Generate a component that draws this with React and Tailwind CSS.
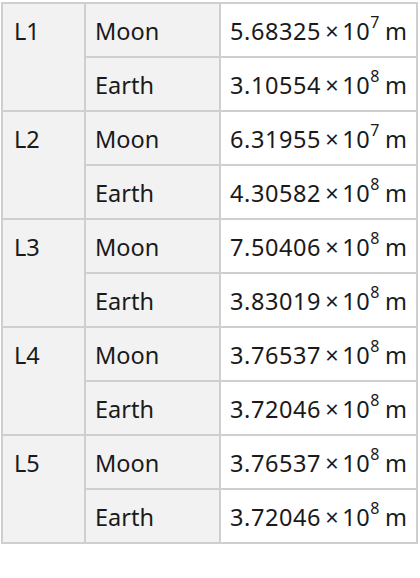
const rows = [
  { point: "L1", moon: ["5.68325", "7"], earth: ["3.10554", "8"] },
  { point: "L2", moon: ["6.31955", "7"], earth: ["4.30582", "8"] },
  { point: "L3", moon: ["7.50406", "8"], earth: ["3.83019", "8"] },
  { point: "L4", moon: ["3.76537", "8"], earth: ["3.72046", "8"] },
  { point: "L5", moon: ["3.76537", "8"], earth: ["3.72046", "8"] },
];

function Distance({ value }) {
  const [mantissa, exp] = value;
  return (
    <span className="tracking-[0.6px]">
      {mantissa}
      <span className="ml-[4px] mr-[3px]">×</span>
      10
      <span className="text-[16px] relative -top-[12px] align-baseline">{exp}</span>
      <span className="ml-[5px]">m</span>
    </span>
  );
}

export default function App() {
  return (
    <div className="w-[420px] h-[578px] bg-white pt-[2px] pl-[1px]">
      <div
        className="grid grid-cols-[81px_133px_195px] gap-[2px] p-[2px] bg-[#cfcfcf] w-[417px] text-[23.5px] text-[#1a1a1a]"
        style={{ fontFamily: "'Noto Sans', sans-serif" }}
      >
        {rows.map((r) => (
          <>
            <div key={r.point} className="row-span-2 bg-[#f2f2f2] pl-[11px] h-[106px] leading-[54px]">
              {r.point}
            </div>
            <div className="bg-[#f2f2f2] pl-[9px] h-[52px] leading-[54px]">Moon</div>
            <div className="bg-white pl-[9px] h-[52px] leading-[54px] whitespace-nowrap">
              <Distance value={r.moon} />
            </div>
            <div className="bg-[#f2f2f2] pl-[9px] h-[52px] leading-[54px]">Earth</div>
            <div className="bg-white pl-[9px] h-[52px] leading-[54px] whitespace-nowrap">
              <Distance value={r.earth} />
            </div>
          </>
        ))}
      </div>
    </div>
  );
}
